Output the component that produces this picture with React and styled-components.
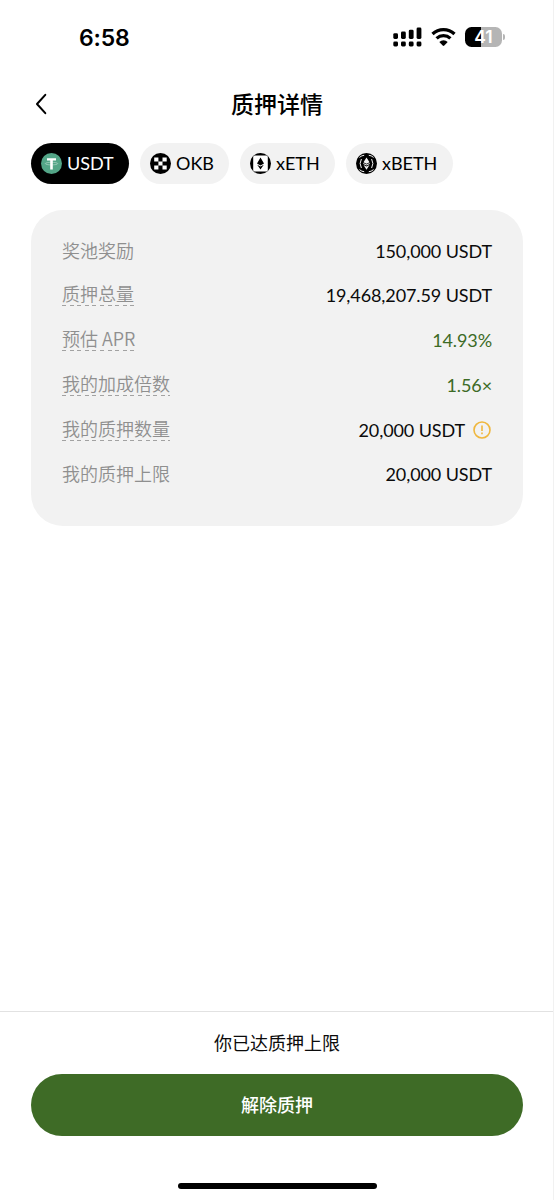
import React from 'react';
import styled, { createGlobalStyle } from 'styled-components';

const GlobalStyle = createGlobalStyle`
  * {
    box-sizing: border-box;
  }

  body {
    margin: 0;
    background: #fff;
    color: #0b0b0b;
    font-family: Lato, "Noto Sans CJK SC", sans-serif;
  }
`;

const tokens = [
  { name: 'USDT', Icon: UsdtIcon, width: 98 },
  { name: 'OKB', Icon: OkbIcon, width: 89 },
  { name: 'xETH', Icon: EthIcon, width: 95 },
  { name: 'xBETH', Icon: BethIcon, width: 107 },
];

const details = [
  { label: '奖池奖励', value: '150,000 USDT', height: 41 },
  { label: '质押总量', value: '19,468,207.59 USDT', hint: true },
  { label: '预估 APR', value: '14.93%', hint: true, green: true },
  { label: '我的加成倍数', value: '1.56×', hint: true, green: true },
  { label: '我的质押数量', value: '20,000 USDT', hint: true, warn: true },
  { label: '我的质押上限', value: '20,000 USDT' },
];

function UsdtIcon() {
  return (
    <svg width="21" height="21" viewBox="0 0 21 21">
      <circle cx="10.5" cy="10.5" r="10.5" fill="#53a587" />
      <path d="M6 5.2h9v2.4h-3.2v9H9.2v-9H6z" fill="#fff" />
      <ellipse cx="10.5" cy="10.6" rx="6.2" ry="1.3" fill="none" stroke="#fff" strokeOpacity=".6" strokeWidth=".6" />
    </svg>
  );
}

function OkbIcon() {
  return (
    <svg width="21" height="21" viewBox="0 0 21 21">
      <circle cx="10.5" cy="10.5" r="10.5" fill="#000" />
      <path
        d="M4.2 4.6h4.2v4H4.2zM12.5 4.6h4.2v4h-4.2zM8.4 8.6h4.1v4H8.4zM4.2 12.6h4.2v4H4.2zM12.5 12.6h4.2v4h-4.2z"
        fill="#fff"
      />
    </svg>
  );
}

function EthIcon() {
  return (
    <svg width="21" height="21" viewBox="0 0 21 21">
      <circle cx="10.5" cy="10.5" r="10.5" fill="#000" />
      <rect x="3.2" y="2.6" width="14.6" height="15.8" rx="1.5" fill="#fff" />
      <path d="M10.5 4.4l3.5 6.1-3.5 2-3.5-2zM7.2 11.7l3.3 1.9 3.3-1.9-3.3 4.8z" fill="#000" />
    </svg>
  );
}

function BethIcon() {
  return (
    <svg width="21" height="21" viewBox="0 0 21 21">
      <circle cx="10.5" cy="10.5" r="10.5" fill="#000" />
      <path
        d="M3.4 4.4Q6 2.3 8.2 2.3M12.8 2.3Q15 2.3 17.6 4.4M3.4 16.6Q6 18.7 8.2 18.7M12.8 18.7Q15 18.7 17.6 16.6M5.4 6Q2.8 10.5 5.4 15M15.6 6Q18.2 10.5 15.6 15"
        fill="none"
        stroke="#f2f2f2"
        strokeWidth="1"
      />
      <path d="M10.5 4.4l3 4.8-3 1.5-3-1.5zM7.5 12l3 1.5 3-1.5-3 4.8zM7.3 10.1l3.2 1.5 3.2-1.5v.9l-3.2 1.5-3.2-1.5z" fill="#f2f2f2" />
    </svg>
  );
}

function SignalIcon() {
  return (
    <svg width="29" height="20" viewBox="0 0 29 20">
      <rect x=".3" y="6.2" width="4.7" height="5.7" rx="1.4" />
      <rect x="8" y="4.5" width="4.8" height="7.4" rx="1.4" />
      <rect x="15.8" y="2.7" width="4.8" height="9.2" rx="1.4" />
      <rect x="23.6" y=".6" width="4.8" height="11.3" rx="1.4" />
      <rect x=".3" y="14.5" width="4.7" height="5" rx="1.4" />
      <rect x="8" y="14.5" width="4.8" height="5" rx="1.4" />
      <rect x="15.8" y="14.5" width="4.8" height="5" rx="1.4" />
      <rect x="23.6" y="14.5" width="4.8" height="5" rx="1.4" />
    </svg>
  );
}

function WifiIcon() {
  return (
    <svg width="25" height="20" viewBox="0 0 25 20">
      <path d="M1.5 7a16 16 0 0 1 22 0M5.6 11.4a10.2 10.2 0 0 1 13.8 0" fill="none" stroke="#000" strokeWidth="3.3" />
      <path d="M8.3 15a6.2 6.2 0 0 1 8.4 0l-3.4 3.5q-.8.8-1.6 0z" />
    </svg>
  );
}

function BackIcon() {
  return (
    <svg width="12" height="22" viewBox="0 0 12 22">
      <path d="M10.3 1.8L2 11l8.3 9.2" fill="none" stroke="#000" strokeWidth="2" strokeLinecap="round" strokeLinejoin="round" />
    </svg>
  );
}

function WarnIcon() {
  return (
    <svg width="18" height="18" viewBox="0 0 18 18">
      <circle cx="9" cy="9" r="8" fill="none" stroke="#efb73e" strokeWidth="1.6" />
      <path d="M9 4.6v5.3M9 11.5v1.7" stroke="#efb73e" strokeWidth="1.6" />
    </svg>
  );
}

export default function App() {
  return (
    <Page>
      <GlobalStyle />
      <StatusBar>
        <Time>6:58</Time>
        <StatusIcons>
          <SignalIcon />
          <WifiIcon />
          <Battery>41</Battery>
        </StatusIcons>
      </StatusBar>
      <Header>
        <BackButton aria-label="返回">
          <BackIcon />
        </BackButton>
        <Title>质押详情</Title>
      </Header>
      <Tabs>
        {tokens.map(({ name, Icon, width }, i) => (
          <Tab key={name} $active={i === 0} $width={width}>
            <Icon />
            <span>{name}</span>
          </Tab>
        ))}
      </Tabs>
      <Card>
        {details.map((item) => (
          <Row key={item.label} $height={item.height}>
            <Label $hint={item.hint}>{item.label}</Label>
            <Value $green={item.green} $hint={item.hint} $warn={item.warn}>
              <span>{item.value}</span>
              {item.warn && <WarnIcon />}
            </Value>
          </Row>
        ))}
      </Card>
      <Footer>
        <Notice>你已达质押上限</Notice>
        <Submit>解除质押</Submit>
        <HomeBar />
      </Footer>
    </Page>
  );
}

const Page = styled.div`
  width: 554px;
  height: 1200px;
  display: flex;
  flex-direction: column;
  background: #fff;
  border-right: 1px solid #f1f1f1;
  overflow: hidden;
`;

const StatusBar = styled.div`
  height: 74px;
  padding: 0 51px 0 79px;
  display: flex;
  align-items: center;
  justify-content: space-between;
`;

const Time = styled.div`
  padding-top: 2px;
  font-family: Inter, sans-serif;
  font-size: 23px;
  font-weight: 600;
  letter-spacing: -0.2px;
  line-height: 30px;
  color: #000;
`;

const StatusIcons = styled.div`
  display: flex;
  align-items: center;
  gap: 9px;
`;

const Battery = styled.div`
  position: relative;
  width: 37px;
  height: 20px;
  border-radius: 6.5px;
  background: linear-gradient(90deg, #000 42%, #b5b5b5 42%);
  color: #fff;
  font-family: Inter, sans-serif;
  font-size: 17.5px;
  font-weight: 600;
  line-height: 20px;
  text-align: center;

  &::after {
    content: '';
    position: absolute;
    top: 7px;
    right: -3px;
    width: 2px;
    height: 6px;
    border-radius: 0 2px 2px 0;
    background: #b5b5b5;
  }
`;

const Header = styled.div`
  height: 60px;
  padding: 0 35px;
  display: grid;
  grid-template-columns: 24px 1fr 24px;
  align-items: center;
`;

const BackButton = styled.button`
  display: flex;
  padding: 0;
  border: 0;
  background: none;
`;

const Title = styled.h1`
  margin: 0;
  padding-left: 1px;
  font-size: 23px;
  font-weight: 500;
  line-height: 32px;
  text-align: center;
  color: #000;
`;

const Tabs = styled.div`
  margin-top: 9px;
  padding-left: 31px;
  display: flex;
  gap: 11px;
`;

const Tab = styled.button`
  width: ${(p) => p.$width}px;
  height: 41px;
  padding: 0 0 0 10px;
  display: flex;
  align-items: center;
  gap: 5px;
  border: 0;
  border-radius: 21px;
  background: ${(p) => (p.$active ? '#000' : '#f2f2f2')};
  color: ${(p) => (p.$active ? '#fff' : '#000')};
  font-family: inherit;
  font-size: 18px;
  white-space: nowrap;

  svg {
    flex: none;
  }

  span {
    padding-bottom: 2px;
  }
`;

const Card = styled.div`
  height: 316px;
  margin: 26px 30px 0 31px;
  padding: 21px 31px 0;
  border-radius: 32px;
  background: #f2f2f2;
`;

const Row = styled.div`
  height: ${(p) => p.$height || 45}px;
  display: flex;
  align-items: center;
  justify-content: space-between;
`;

const Label = styled.span`
  height: 23px;
  font-family: "Noto Sans CJK SC", sans-serif;
  font-size: 18px;
  font-weight: 350;
  line-height: 21px;
  color: #8f8f8f;
  ${(p) =>
    p.$hint &&
    `
    background: repeating-linear-gradient(90deg, #a2a2a2 0 4px, transparent 4px 7.6px) 0 100% / 100% 1.5px no-repeat;
  `}
`;

const Value = styled.span`
  display: flex;
  align-items: center;
  gap: 8px;
  padding-right: ${(p) => (p.$warn ? 1 : 0)}px;
  font-size: 18px;
  letter-spacing: -0.1px;
  line-height: 24px;
  color: ${(p) => (p.$green ? '#3d6b26' : '#0b0b0b')};

  span {
    padding-bottom: ${(p) => (p.$hint ? 0 : 1)}px;
  }
`;

const Footer = styled.div`
  margin-top: auto;
  height: 189px;
  padding: 19px 30px 0 31px;
  display: flex;
  flex-direction: column;
  align-items: center;
  border-top: 1px solid #e2e2e2;
`;

const Notice = styled.div`
  font-size: 18px;
  line-height: 24px;
`;

const Submit = styled.button`
  width: 100%;
  height: 62px;
  margin-top: 19px;
  padding: 0 0 3px;
  border: 0;
  border-radius: 31px;
  background: #3e6b26;
  color: #fff;
  font-family: inherit;
  font-size: 18px;
  font-weight: 500;
`;

const HomeBar = styled.div`
  width: 199px;
  height: 6px;
  margin-top: 47px;
  border-radius: 4px;
  background: #000;
`;
